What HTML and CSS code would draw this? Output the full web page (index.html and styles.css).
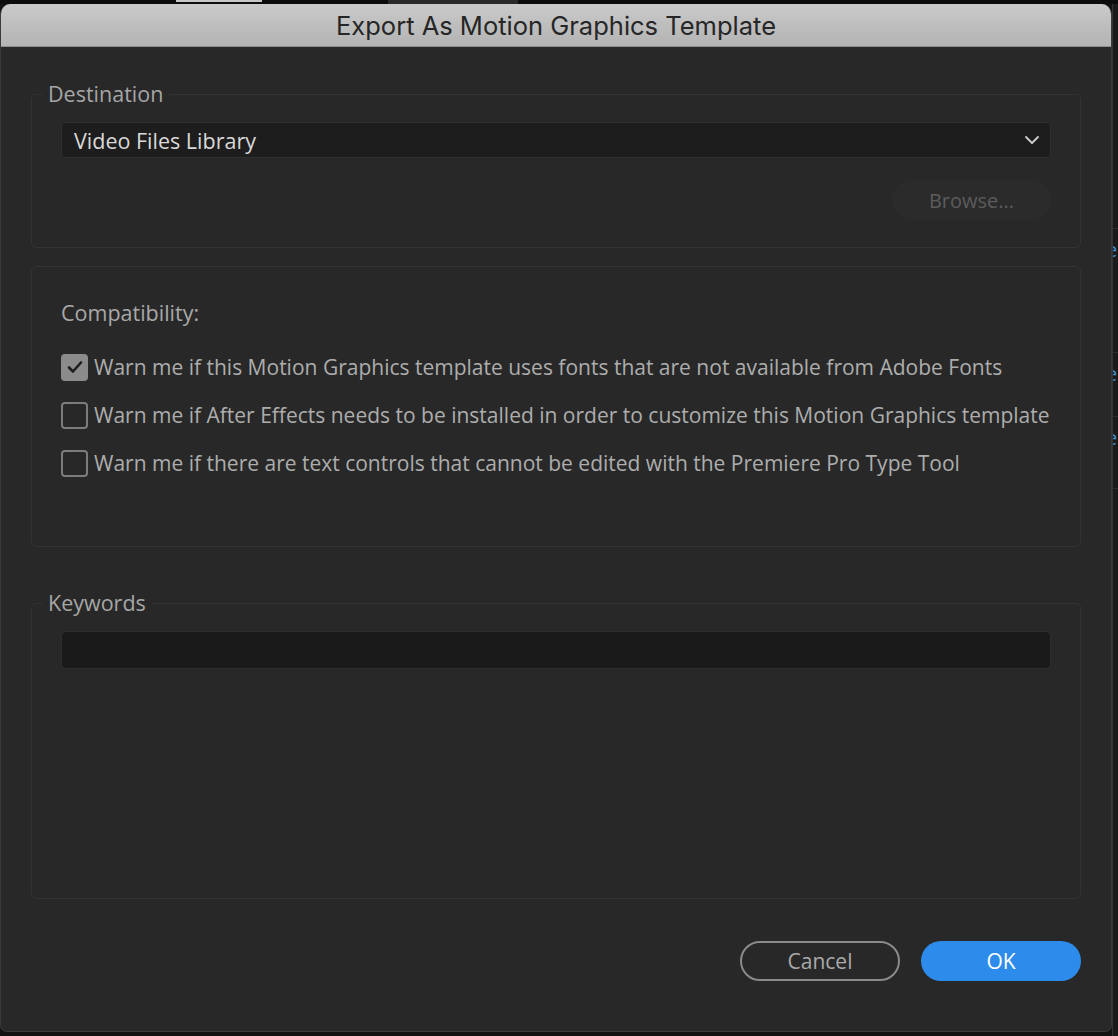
FILE: index.html
```html
<!DOCTYPE html>
<html lang="en">
<head>
<meta charset="utf-8">
<title>Export As Motion Graphics Template</title>
<link rel="stylesheet" href="styles.css">
</head>
<body>
<div class="backdrop-top">
  <span class="bt-light"></span>
  <span class="bt-dark"></span>
</div>
<div class="screen">
  <div class="dialog">
    <div class="titlebar">Export As Motion Graphics Template</div>
    <div class="content">
      <fieldset class="group dest">
        <legend>Destination</legend>
        <div class="select">
          <span class="select-value">Video Files Library</span>
          <svg class="chevron" width="16" height="10" viewBox="0 0 16 10"><path d="M2 2 L8 8 L14 2" fill="none" stroke="#cfcfcf" stroke-width="1.8" stroke-linecap="round" stroke-linejoin="round"/></svg>
        </div>
        <div class="browse-row">
          <button class="browse" type="button">Browse...</button>
        </div>
      </fieldset>

      <section class="group compat">
        <div class="compat-title">Compatibility:</div>
        <label class="check-row">
          <span class="box checked">
            <svg width="18" height="16" viewBox="0 0 18 16"><path d="M3 8.5 L7 12.5 L15 3.5" fill="none" stroke="#1f1f1f" stroke-width="2.6" stroke-linecap="round" stroke-linejoin="round"/></svg>
          </span>
          <span class="check-text">Warn me if this Motion Graphics template uses fonts that are not available from Adobe Fonts</span>
        </label>
        <label class="check-row">
          <span class="box"></span>
          <span class="check-text">Warn me if After Effects needs to be installed in order to customize this Motion Graphics template</span>
        </label>
        <label class="check-row">
          <span class="box"></span>
          <span class="check-text">Warn me if there are text controls that cannot be edited with the Premiere Pro Type Tool</span>
        </label>
      </section>

      <fieldset class="group keywords">
        <legend>Keywords</legend>
        <div class="text-input"></div>
      </fieldset>

      <div class="actions">
        <button class="btn cancel" type="button">Cancel</button>
        <button class="btn ok" type="button">OK</button>
      </div>
    </div>
  </div>
  <div class="behind-right">
    <div class="br-cell br-a"></div>
    <div class="br-cell br-e1"><span class="blue-e">e</span></div>
    <div class="br-cell br-e2"><span class="blue-e">e</span></div>
    <div class="br-cell br-e3"><span class="blue-e">e</span></div>
    <div class="br-cell br-rest"></div>
  </div>
</div>
</body>
</html>
```

FILE: styles.css
```css
* { box-sizing: border-box; }

html, body {
  margin: 0;
  padding: 0;
  background: #121212;
  width: 1118px;
  height: 1036px;
  overflow: hidden;
  font-family: "Open Sans", "Noto Sans", sans-serif;
}

.backdrop-top {
  height: 4px;
  display: flex;
  background: #0c0c0c;
}
.bt-light {
  margin-left: 176px;
  width: 86px;
  height: 2px;
  background: #c8c8c8;
}
.bt-dark {
  margin-left: 126px;
  width: 130px;
  height: 4px;
  background: #2a2a2a;
}

.screen {
  display: flex;
  height: 1032px;
}

.dialog {
  width: 1112px;
  height: 1028px;
  background: #282828;
  border-radius: 10px 10px 7px 7px;
  border: 1px solid #3a3a3a;
  border-top: none;
  overflow: hidden;
  display: flex;
  flex-direction: column;
}

.titlebar {
  height: 43px;
  flex: none;
  background: linear-gradient(#cacaca, #b3b3b3);
  border-bottom: 1px solid #8e8e8e;
  color: #262626;
  font-family: "Inter", "Roboto", sans-serif;
  font-size: 25.5px;
  display: flex;
  align-items: center;
  justify-content: center;
  padding-top: 1px;
}

.content {
  padding: 0 30px 0 30px;
  display: flex;
  flex-direction: column;
}

.group {
  border: 1px solid #333333;
  border-radius: 5px;
  margin: 0;
  min-width: 0;
}

fieldset.group {
  padding: 0 29px;
}

legend {
  margin-left: -19px;
  padding: 0 6px;
  font-size: 21.5px;
  line-height: 24px;
  color: #a6a6a6;
}

.dest {
  margin-top: 35px;
  padding-top: 16px !important;
  padding-bottom: 27px !important;
}

.select {
  height: 36px;
  background: #1d1d1d;
  border: 1px solid #2f2f2f;
  border-radius: 5px;
  display: flex;
  align-items: center;
  justify-content: space-between;
  padding: 0 10px 0 12px;
}
.select-value {
  color: #d9d9d9;
  font-size: 21.5px;
}
.chevron { display: block; }

.browse-row {
  display: flex;
  justify-content: flex-end;
  margin-top: 22px;
}
.browse {
  width: 159px;
  height: 40px;
  border: none;
  border-radius: 20px;
  background: #2b2b2b;
  color: #5c5c5c;
  font-family: inherit;
  font-size: 20px;
  padding: 0;
}

.compat {
  margin-top: 18px;
  padding: 34px 29px 69px 29px;
}
.compat-title {
  font-size: 21.5px;
  line-height: 24px;
  color: #a8a8a8;
}
.check-row {
  display: flex;
  align-items: center;
  gap: 6px;
  height: 28px;
  margin-top: 20px;
}
.compat-title + .check-row { margin-top: 28px; }

.box {
  width: 27px;
  height: 27px;
  flex: none;
  border: 2px solid #7c7c7c;
  border-radius: 4px;
  display: flex;
  align-items: center;
  justify-content: center;
}
.box.checked {
  background: #8b8b8b;
  border-color: #8b8b8b;
}
.box svg { display: block; }

.check-text {
  font-size: 21px;
  color: #adadad;
  white-space: nowrap;
}

.keywords {
  margin-top: 44px;
  padding-top: 16px !important;
  padding-bottom: 229px !important;
}
.text-input {
  height: 38px;
  background: #1a1a1a;
  border: 1px solid #2e2e2e;
  border-radius: 5px;
}

.actions {
  display: flex;
  justify-content: flex-end;
  gap: 21px;
  margin-top: 42px;
}
.btn {
  width: 160px;
  height: 40px;
  border-radius: 20px;
  font-family: inherit;
  font-size: 21px;
  padding: 0;
}
.cancel {
  background: transparent;
  border: 2px solid #8a8a8a;
  color: #aaaaaa;
}
.ok {
  background: #2d8ceb;
  border: none;
  color: #ffffff;
}

.behind-right {
  width: 6px;
  border-left: 1px solid #343434;
  background: #1a1a1a;
  display: flex;
  flex-direction: column;
  overflow: hidden;
}
.br-cell {
  flex: none;
  border-bottom: 1px solid #2c2c2c;
  overflow: hidden;
}
.br-a { height: 225px; }
.br-e1 { height: 124px; }
.br-e2 { height: 64px; }
.br-e3 { height: 72px; }
.br-rest { flex: 1; border-bottom: none; }
.blue-e {
  display: block;
  margin-left: -7px;
  margin-top: 9px;
  font-size: 20px;
  line-height: 24px;
  color: #3f8fd6;
}
```
